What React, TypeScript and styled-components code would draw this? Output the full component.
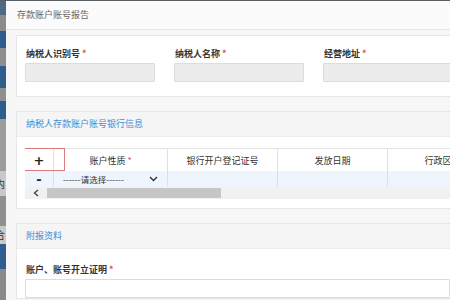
import styled, { createGlobalStyle } from "styled-components";

const GlobalStyle = createGlobalStyle`
  html, body {
    margin: 0;
    padding: 0;
    width: 450px;
    height: 300px;
    overflow: hidden;
    font-family: "Noto Sans CJK SC", "Noto Sans", sans-serif;
  }
`;

type Seg = { h: number; color: string; ch?: string };

const backdrop: Seg[] = [
    {h: 14, color: "#4d6a85"},
    {h: 16, color: "#8c8c8c"},
    {h: 17, color: "#2e5d8e"},
    {h: 18, color: "#8e8e8e"},
    {h: 22, color: "#2e5d8e"},
    {h: 13, color: "#909090"},
    {h: 18, color: "#2e5d8e"},
    {h: 52, color: "#9c9c9c"},
    {h: 25, color: "#c9c9c9", ch: "内"},
    {h: 30, color: "#909090"},
    {h: 18, color: "#c9c9c9", ch: "合"},
    {h: 25, color: "#2e5d8e"},
    {h: 32, color: "#8a8a8a"},
];

const columns = [
    {title: "账户性质", required: true, width: 114},
    {title: "银行开户登记证号", width: 110},
    {title: "发放日期", width: 110},
    {title: "行政区划", width: 110},
];

export default function App() {
    return (
        <>
            <GlobalStyle/>
            <PageStyle>
                <BackdropStyle>
                    {backdrop.map((s, i) => (
                        <SegmentStyle key={i} $h={s.h} $color={s.color}>{s.ch}</SegmentStyle>
                    ))}
                </BackdropStyle>
                <ModalStyle>
                    <ModalTitleStyle>存款账户账号报告</ModalTitleStyle>
                    <ModalBodyStyle>
                        <CardStyle>
                            <FieldGridStyle>
                                <FieldStyle>
                                    <LabelStyle>纳税人识别号<Star>*</Star></LabelStyle>
                                    <InputStyle $filled/>
                                </FieldStyle>
                                <FieldStyle>
                                    <LabelStyle>纳税人名称<Star>*</Star></LabelStyle>
                                    <InputStyle $filled/>
                                </FieldStyle>
                                <FieldStyle>
                                    <LabelStyle>经营地址<Star>*</Star></LabelStyle>
                                    <InputStyle $filled/>
                                </FieldStyle>
                            </FieldGridStyle>
                        </CardStyle>

                        <CardStyle>
                            <CardHeaderStyle>纳税人存款账户账号银行信息</CardHeaderStyle>
                            <TableBodyStyle>
                                <TableWrapStyle>
                                    <HeadRowStyle>
                                        <CellStyle $w={28}>
                                            <SignStyle>+</SignStyle>
                                        </CellStyle>
                                        {columns.map(c => (
                                            <CellStyle key={c.title} $w={c.width} $divider>
                                                {c.title}{c.required && <Star>*</Star>}
                                            </CellStyle>
                                        ))}
                                    </HeadRowStyle>
                                    <DataRowStyle>
                                        <CellStyle $w={28}>
                                            <SignStyle>-</SignStyle>
                                        </CellStyle>
                                        <CellStyle $w={114} $divider>
                                            <SelectStyle>
                                                <span>------请选择------</span>
                                                <svg width="9" height="6" viewBox="0 0 9 6">
                                                    <path d="M1 1 L4.5 4.5 L8 1" fill="none" stroke="#333" strokeWidth="1.4"/>
                                                </svg>
                                            </SelectStyle>
                                        </CellStyle>
                                        <CellStyle $w={110} $divider/>
                                        <CellStyle $w={110} $divider/>
                                        <CellStyle $w={110} $divider/>
                                    </DataRowStyle>
                                    <ScrollbarStyle>
                                        <ScrollArrowStyle>
                                            <svg width="6" height="8" viewBox="0 0 6 8">
                                                <path d="M5 1 L1.5 4 L5 7" fill="none" stroke="#444" strokeWidth="1.4"/>
                                            </svg>
                                        </ScrollArrowStyle>
                                        <ScrollThumbStyle/>
                                    </ScrollbarStyle>
                                    <HighlightStyle/>
                                </TableWrapStyle>
                            </TableBodyStyle>
                        </CardStyle>

                        <CardStyle>
                            <CardHeaderStyle>附报资料</CardHeaderStyle>
                            <AttachBodyStyle>
                                <LabelStyle>账户、账号开立证明<Star>*</Star></LabelStyle>
                                <InputStyle/>
                            </AttachBodyStyle>
                        </CardStyle>
                    </ModalBodyStyle>
                </ModalStyle>
            </PageStyle>
        </>
    )
}

const PageStyle = styled.div`
  display: flex;
  width: 450px;
  height: 300px;
  overflow: hidden;
  border-top: 1px solid #5a5f66;
  box-sizing: border-box;
`;

const BackdropStyle = styled.div`
  width: 6px;
  flex-shrink: 0;
  display: flex;
  flex-direction: column;
  overflow: hidden;
`;

const SegmentStyle = styled.div<{ $h: number; $color: string }>`
  height: ${p => p.$h}px;
  flex-shrink: 0;
  background: ${p => p.$color};
  font-size: 10px;
  line-height: ${p => p.$h}px;
  color: #333;
  text-indent: -5px;
  white-space: nowrap;
`;

const ModalStyle = styled.div`
  flex: 1;
  min-width: 0;
  background: #f7f7f7;
  display: flex;
  flex-direction: column;
`;

const ModalTitleStyle = styled.div`
  height: 28px;
  line-height: 27px;
  padding-left: 11px;
  font-size: 9px;
  color: #666;
  background: #fbfbfb;
  border-bottom: 1px solid #e6e6e6;
  flex-shrink: 0;
`;

const ModalBodyStyle = styled.div`
  padding: 5px 0 0 10px;
  display: flex;
  flex-direction: column;
  gap: 14px;
`;

const CardStyle = styled.div`
  background: #fff;
  border: 1px solid #e6e6e6;
  border-right: none;
  flex-shrink: 0;
`;

const FieldGridStyle = styled.div`
  display: grid;
  grid-template-columns: 130px 130px 130px;
  column-gap: 19px;
  padding: 11px 0 14px 8px;
`;

const FieldStyle = styled.div`
  display: flex;
  flex-direction: column;
  gap: 3px;
`;

const LabelStyle = styled.div`
  font-size: 9px;
  line-height: 13px;
  font-weight: 600;
  color: #333;
  padding-left: 1px;
  white-space: nowrap;
`;

const Star = styled.span`
  color: #e24b4b;
  margin-left: 2px;
`;

const InputStyle = styled.div<{ $filled?: boolean }>`
  height: 19px;
  box-sizing: border-box;
  border: 1px solid #dcdcdc;
  border-radius: 1px;
  background: ${p => p.$filled ? "#ececec" : "#fff"};
`;

const CardHeaderStyle = styled.div`
  height: 24px;
  line-height: 24px;
  padding-left: 9px;
  font-size: 9px;
  color: #3b8fd6;
  background: #f5f5f5;
  border-bottom: 1px solid #ececec;
`;

const TableBodyStyle = styled.div`
  padding: 11px 0 9px 8px;
`;

const TableWrapStyle = styled.div`
  position: relative;
  display: flex;
  flex-direction: column;
  overflow: hidden;
`;

const HeadRowStyle = styled.div`
  display: flex;
  height: 23px;
  border-top: 1px solid #e3e3e3;
  box-sizing: border-box;
  background: #fff;
`;

const DataRowStyle = styled.div`
  display: flex;
  height: 16px;
  background: #eef5fc;
`;

const CellStyle = styled.div<{ $w: number; $divider?: boolean }>`
  width: ${p => p.$w}px;
  flex-shrink: 0;
  display: flex;
  align-items: center;
  justify-content: center;
  font-size: 9px;
  color: #333;
  white-space: nowrap;
  border-left: ${p => p.$divider ? "1px solid #e0e0e0" : "none"};
  box-sizing: border-box;
`;

const SignStyle = styled.span`
  font-family: "DejaVu Sans", sans-serif;
  font-size: 13px;
  font-weight: bold;
  color: #222;
  line-height: 1;
`;

const SelectStyle = styled.div`
  width: 100%;
  display: flex;
  align-items: center;
  justify-content: space-between;
  padding: 0 9px 0 9px;
  font-size: 8.5px;
  color: #333;
`;

const ScrollbarStyle = styled.div`
  height: 12px;
  display: flex;
  align-items: center;
  background: #f1f1f1;
`;

const ScrollArrowStyle = styled.div`
  width: 22px;
  display: flex;
  justify-content: center;
`;

const ScrollThumbStyle = styled.div`
  width: 174px;
  height: 10px;
  background: #c6c6c6;
`;

const HighlightStyle = styled.div`
  position: absolute;
  left: -1px;
  top: 0;
  width: 41px;
  height: 23px;
  border: 1px solid #e07a7a;
  box-sizing: border-box;
  pointer-events: none;
`;

const AttachBodyStyle = styled.div`
  display: flex;
  flex-direction: column;
  gap: 3px;
  padding: 14px 0 0 8px;
`;
